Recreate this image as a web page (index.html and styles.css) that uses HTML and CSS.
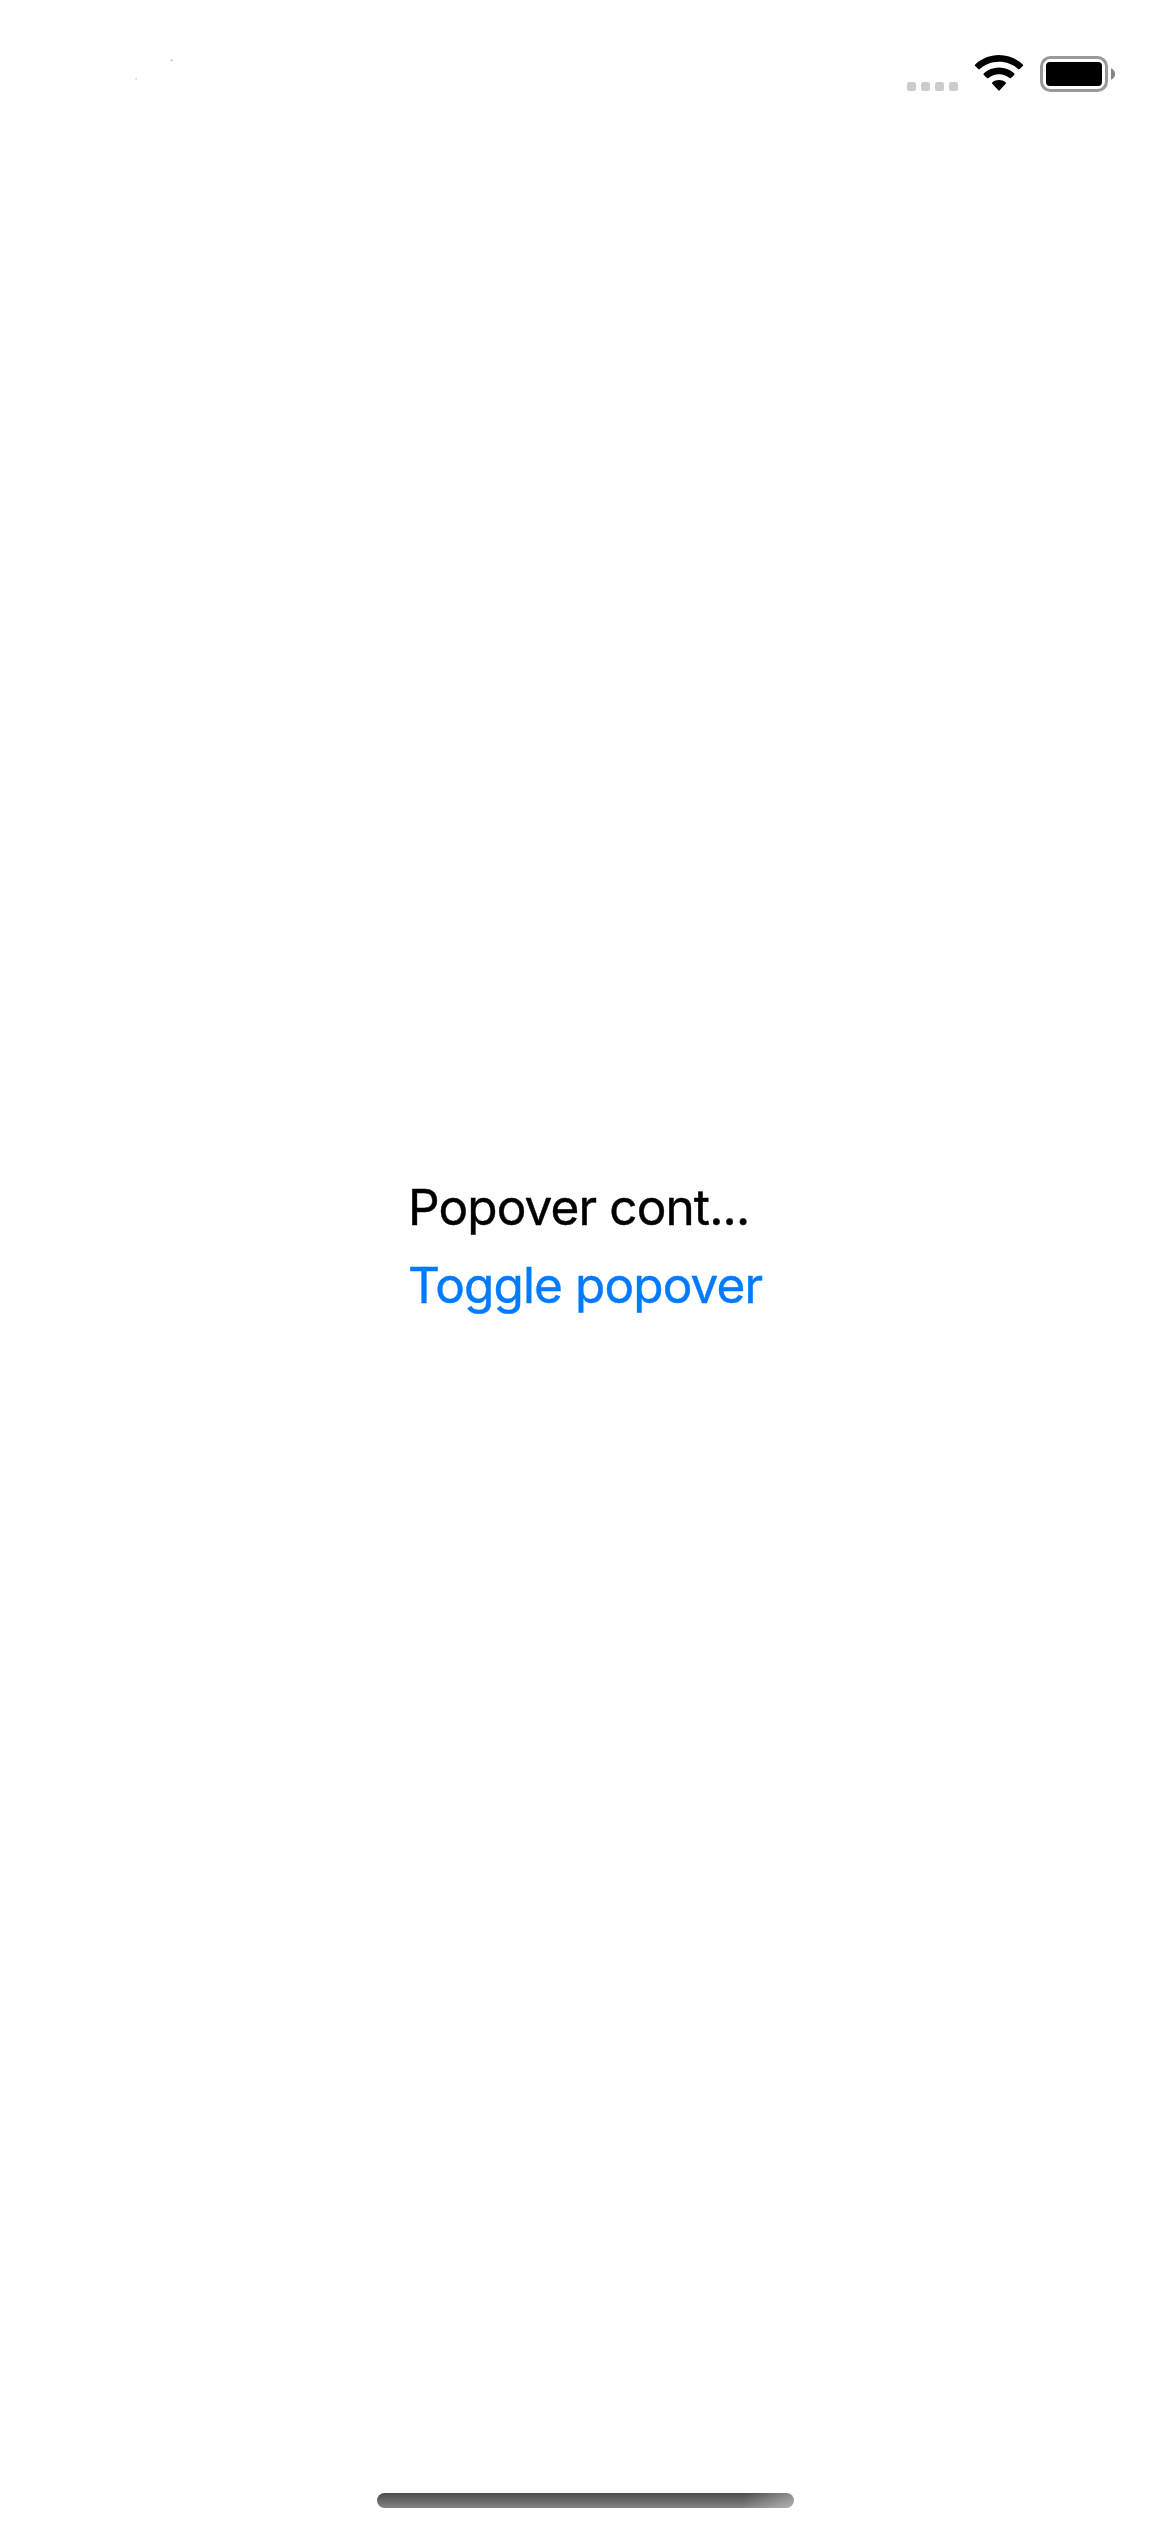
FILE: index.html
```html
<!DOCTYPE html>
<html lang="en">
<head>
<meta charset="utf-8">
<title>Popover</title>
<link rel="stylesheet" href="styles.css">
</head>
<body>
<div class="screen">
  <header class="status-bar">
    <svg class="clock-specks" width="100" height="60" viewBox="0 0 100 60" aria-hidden="true">
      <path fill="#c4c4c4" d="M60 20h3v1h-3z"/>
      <path fill="#e6e6e6" d="M61 19h2v1h-2zM25 38h2v2h-2z"/>
      <path fill="#f0f0f0" d="M26 37h1v1h-1z"/>
    </svg>
    <div class="signal"><i class="dot"></i><i class="dot"></i><i class="dot"></i><i class="dot"></i></div>
    <svg class="wifi" width="50" height="38" viewBox="0 0 50 38" aria-hidden="true">
      <path d="M25 1C15.800 1 7.400 4.600 1.200 10.400Q.4 11.200 1.200 12L4.300 15.100Q5 15.800 5.800 15.100C10.800 10.500 17.500 7.800 25 7.800S39.200 10.500 44.200 15.100Q45 15.800 45.700 15.100L48.800 12Q49.600 11.200 48.800 10.400C42.600 4.600 34.200 1 25 1Z"/>
      <path d="M25 13.500C19.200 13.500 13.900 15.700 9.900 19.300Q9 20.100 9.800 20.900L13 24.100Q13.700 24.700 14.500 24C17.300 21.700 21 20.300 25 20.300S32.700 21.700 35.500 24Q36.300 24.700 37 24.100L40.200 20.900Q41 20.100 40.100 19.300C36.100 15.700 30.800 13.500 25 13.500Z"/>
      <path d="M25 26C22.500 26 20.200 26.900 18.400 28.300Q17.500 29 18.300 29.800L24.300 36.300Q25 37 25.700 36.300L31.700 29.800Q32.500 29 31.600 28.300C29.800 26.900 27.500 26 25 26Z"/>
    </svg>
    <svg class="battery" width="76" height="38" viewBox="0 0 76 38" aria-hidden="true">
      <rect x="1.500" y="1.500" width="65" height="33" rx="9" fill="none" stroke="#999" stroke-width="3"/>
      <rect x="6" y="6" width="56" height="24" rx="4"/>
      <path fill="#858585" d="M71 12.300C73.500 13.200 75 15.300 75 18S73.500 22.800 71 23.700Z"/>
    </svg>
  </header>
  <main class="content">
    <div class="stack">
      <p class="label">Popover cont...</p>
      <button class="toggle" type="button">Toggle popover</button>
    </div>
  </main>
  <footer class="home-area"><div class="home-indicator"></div></footer>
</div>
</body>
</html>
```
FILE: styles.css
```css
* { box-sizing: border-box; }
body { margin: 0; background: #fff; }
.screen {
  display: flex;
  flex-direction: column;
  width: 1170px;
  height: 2532px;
  overflow: hidden;
  background: #fff;
  font-family: Inter, "Liberation Sans", sans-serif;
}
.status-bar {
  display: flex;
  align-items: flex-start;
  height: 141px;
  padding: 40px 0 0 110px;
}
.signal {
  display: flex;
  gap: 5px;
  margin: 42px 0 0 697px;
}
.dot {
  width: 9px;
  height: 9px;
  border-radius: 2.5px;
  background: #ccc;
}
.wifi { margin: 14px 0 0 16px; }
.battery { margin: 16px 0 0 16px; }
.content {
  display: flex;
  flex: 1;
  align-items: center;
  justify-content: center;
  padding-bottom: 78px;
}
.stack {
  display: flex;
  flex-direction: column;
  gap: 17px;
  width: 354px;
}
.label, .toggle {
  margin: 0;
  padding: 0;
  border: 0;
  background: none;
  font-family: inherit;
  font-size: 49.5px;
  font-weight: 400;
  line-height: 61px;
  letter-spacing: -0.88px;
  text-align: left;
  white-space: nowrap;
  -webkit-text-stroke: 0.4px currentColor;
}
.label { color: #000; }
.toggle { color: #007aff; }
.home-area {
  display: flex;
  justify-content: center;
  height: 102px;
  padding-top: 63px;
}
.home-indicator {
  width: 417px;
  height: 15px;
  border-radius: 7.5px;
  background:
    linear-gradient(100deg, transparent, rgba(255, 255, 255, .38)) right / 50px 100% no-repeat,
    linear-gradient(#4c4c4c, #838383);
}
```
